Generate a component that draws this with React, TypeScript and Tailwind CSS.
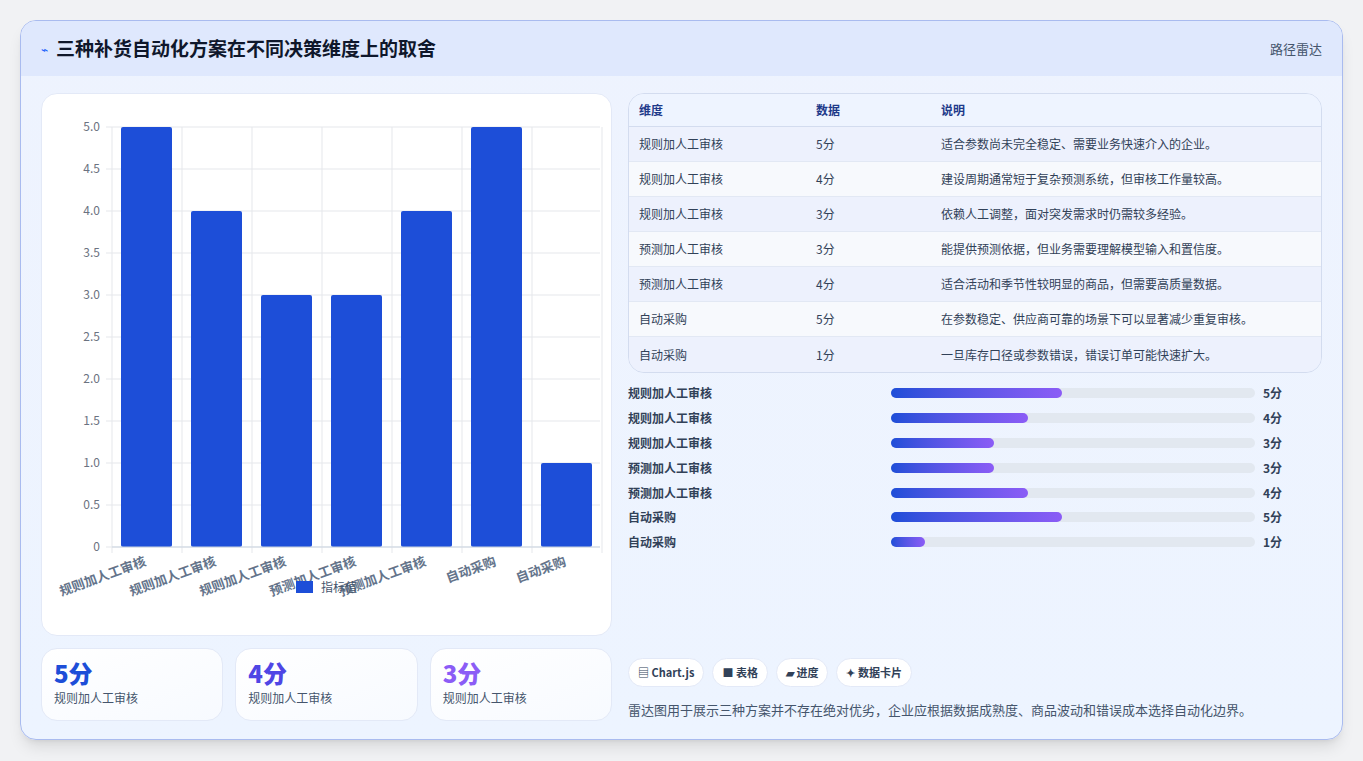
import React from "react";

const font = { fontFamily: '"Noto Sans CJK SC", "Noto Sans", sans-serif' };

const rows = [
  { name: "规则加人工审核", v: 5, note: "适合参数尚未完全稳定、需要业务快速介入的企业。" },
  { name: "规则加人工审核", v: 4, note: "建设周期通常短于复杂预测系统，但审核工作量较高。" },
  { name: "规则加人工审核", v: 3, note: "依赖人工调整，面对突发需求时仍需较多经验。" },
  { name: "预测加人工审核", v: 3, note: "能提供预测依据，但业务需要理解模型输入和置信度。" },
  { name: "预测加人工审核", v: 4, note: "适合活动和季节性较明显的商品，但需要高质量数据。" },
  { name: "自动采购", v: 5, note: "在参数稳定、供应商可靠的场景下可以显著减少重复审核。" },
  { name: "自动采购", v: 1, note: "一旦库存口径或参数错误，错误订单可能快速扩大。" },
];

function BarChart() {
  const x0 = 70;
  const y0 = 441;
  const unit = 84;
  const step = 70;
  const ticks = [0, 0.5, 1, 1.5, 2, 2.5, 3, 3.5, 4, 4.5, 5];
  return (
    <svg width="568" height="500" className="block">
      {ticks.map((t) => (
        <g key={t}>
          <line x1={x0 - 6} x2={558} y1={y0 - t * unit} y2={y0 - t * unit} stroke="#e5e7eb" />
          <text x={x0 - 12} y={y0 - t * unit + 4} textAnchor="end" fontSize="12" fill="#6b7280" style={font}>
            {t === 0 ? "0" : t.toFixed(1)}
          </text>
        </g>
      ))}
      {Array.from({ length: 8 }).map((_, i) => (
        <line key={i} x1={x0 + i * step} x2={x0 + i * step} y1={y0 - 5 * unit} y2={y0 + 6} stroke="#e5e7eb" />
      ))}
      {rows.map((r, i) => (
        <g key={i}>
          <rect x={x0 + i * step + 9} y={y0 - r.v * unit} width={51} height={r.v * unit} rx={2} fill="#1d4ed8" />
          <text
            transform={`translate(${x0 + i * step + 35} ${y0 + 18}) rotate(-20)`}
            textAnchor="end"
            fontSize="13"
            fontWeight="700"
            fill="#64748b"
            style={font}
          >
            {r.name}
          </text>
        </g>
      ))}
      <line x1={x0} x2={558} y1={y0} y2={y0} stroke="#cbd5e1" />
    </svg>
  );
}

export default function App() {
  return (
    <div className="min-h-screen bg-[#f1f2f4] p-5" style={font}>
      <div className="flex h-[720px] flex-col overflow-hidden rounded-2xl border border-[#a9bbef] bg-gradient-to-b from-[#eef3fe] to-[#edf4ff] shadow-lg">
        <div className="flex h-[55px] shrink-0 items-center justify-between bg-[#dfe8fd] px-5">
          <div className="flex items-center gap-2">
            <span className="text-xs text-blue-600">⌁</span>
            <h1 className="text-[19px] font-bold text-slate-900">三种补货自动化方案在不同决策维度上的取舍</h1>
          </div>
          <span className="text-[13px] text-slate-600">路径雷达</span>
        </div>

        <div className="flex flex-1 gap-4 px-5 pt-[17px]">
          <div className="flex w-[571px] flex-col gap-3">
            <div className="flex h-[543px] flex-col items-start rounded-2xl border border-[#e3e9f7] bg-white pt-3">
              <BarChart />
              <div className="-mt-[28px] flex w-full items-center justify-center gap-2">
                <span className="h-3 w-[17px] bg-[#1d4ed8]" />
                <span className="text-[12px] text-slate-600">指标值</span>
              </div>
            </div>
            <div className="grid grid-cols-3 gap-3">
              {[
                { v: "5分", c: "text-[#1d4ed8]" },
                { v: "4分", c: "text-[#4f46e5]" },
                { v: "3分", c: "text-[#8b5cf6]" },
              ].map((s, i) => (
                <div key={i} className="h-[73px] rounded-2xl border border-[#e3e9f7] bg-gradient-to-br from-white to-[#f7faff] px-3 pt-2">
                  <div className={`text-[24px] font-extrabold leading-8 ${s.c}`}>{s.v}</div>
                  <div className="text-[12px] text-slate-600">规则加人工审核</div>
                </div>
              ))}
            </div>
          </div>

          <div className="flex flex-1 flex-col">
            <div className="overflow-hidden rounded-2xl border border-[#d3dcef] text-[12px]">
              <div className="grid h-[33px] grid-cols-[177px_125px_1fr] items-center border-b border-[#d3dcef] bg-[#eef4ff] px-[10px] font-semibold text-[#1e3a8a]">
                <span>维度</span>
                <span>数据</span>
                <span>说明</span>
              </div>
              {rows.map((r, i) => (
                <div
                  key={i}
                  className={`grid h-[35px] grid-cols-[177px_125px_1fr] items-center px-[10px] text-slate-700 ${i % 2 === 0 ? "bg-[#edf1fd]" : "bg-[#f7f9fd]"} ${i < rows.length - 1 ? "border-b border-[#e2e8f4]" : ""}`}
                >
                  <span>{r.name}</span>
                  <span>{r.v}分</span>
                  <span>{r.note}</span>
                </div>
              ))}
            </div>

            <div className="mt-[8px] flex flex-col">
              {rows.map((r, i) => (
                <div key={i} className="flex h-[24.8px] items-center text-[12px] font-semibold text-slate-700">
                  <span className="w-[263px]">{r.name}</span>
                  <div className="h-[10px] w-[364px] rounded-full bg-[#e2e8f0]">
                    <div
                      className="h-full rounded-full bg-gradient-to-r from-[#1d4ed8] to-[#8b5cf6]"
                      style={{ width: `${r.v * 34.2}px` }}
                    />
                  </div>
                  <span className="ml-2">{r.v}分</span>
                </div>
              ))}
            </div>

            <div className="mt-auto pb-[20px]">
              <div className="flex gap-2">
                {["▤ Chart.js", "■ 表格", "▰ 进度", "✦ 数据卡片"].map((c) => (
                  <span key={c} className="rounded-full border border-[#e3e9f7] bg-white px-[9px] py-[5px] text-[11px] font-semibold text-slate-700">
                    {c}
                  </span>
                ))}
              </div>
              <p className="mt-[13px] text-[13px] text-slate-600">
                雷达图用于展示三种方案并不存在绝对优劣，企业应根据数据成熟度、商品波动和错误成本选择自动化边界。
              </p>
            </div>
          </div>
        </div>
      </div>
    </div>
  );
}
